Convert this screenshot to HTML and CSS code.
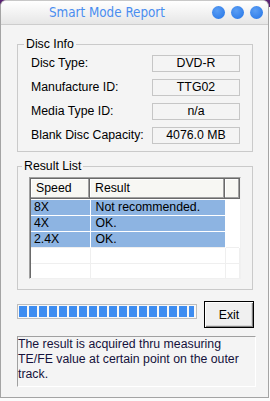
FILE: index.html
```html
<!DOCTYPE html>
<html lang="en">
<head>
    <meta charset="UTF-8">
    <meta name="viewport" content="width=device-width, initial-scale=1.0">
    <title>Smart Mode Report</title>
    <link rel="stylesheet" href="styles.css">
</head>
<body>
    <div class="window">
        <div class="titlebar">
            <span class="title">Smart Mode Report</span>
            <div class="dots">
                <span class="dot"></span>
                <span class="dot"></span>
                <span class="dot"></span>
            </div>
        </div>
        <div class="content">
            <fieldset class="group disc-info">
                <legend>Disc Info</legend>
                <div class="row"><span class="label">Disc Type:</span><span class="value">DVD-R</span></div>
                <div class="row"><span class="label">Manufacture ID:</span><span class="value">TTG02</span></div>
                <div class="row"><span class="label">Media Type ID:</span><span class="value">n/a</span></div>
                <div class="row"><span class="label">Blank Disc Capacity:</span><span class="value">4076.0 MB</span></div>
            </fieldset>

            <fieldset class="group result-list">
                <legend>Result List</legend>
                <div class="listview">
                    <div class="listview-inner">
                        <table>
                            <thead>
                                <tr><th class="col-speed">Speed</th><th class="col-result">Result</th><th class="col-fill"></th></tr>
                            </thead>
                            <tbody>
                                <tr class="sel"><td>8X</td><td>Not recommended.</td><td></td></tr>
                                <tr class="sel"><td>4X</td><td>OK.</td><td></td></tr>
                                <tr class="sel"><td>2.4X</td><td>OK.</td><td></td></tr>
                                <tr><td></td><td></td><td></td></tr>
                                <tr><td></td><td></td><td></td></tr>
                            </tbody>
                        </table>
                    </div>
                </div>
            </fieldset>

            <div class="actions">
                <div class="progress"><div class="progress-fill"></div></div>
                <button class="exit" type="button">Exit</button>
            </div>

            <div class="note">The result is acquired thru measuring TE/FE value at certain point on the outer track.</div>
        </div>
    </div>
</body>
</html>
```

FILE: styles.css
```css
body {
    margin: 0;
    width: 270px;
    height: 401px;
    background: linear-gradient(to bottom, #5a2273 0, #5a2273 7px, #fbfbfb 7px);
    font-family: "Liberation Sans", Arial, sans-serif;
    font-size: 12.3px;
    color: #000;
}
.window {
    width: 269px;
    height: 398px;
    box-sizing: border-box;
    border: 1px solid #a4a4a4;
    border-top-color: #c8c8c8;
    border-radius: 6px 6px 0 0;
    background: #f4f4f4;
    overflow: hidden;
}
.titlebar {
    height: 23px;
    border-bottom: 1px solid #cdcdcd;
    background: linear-gradient(to bottom, #ffffff, #e6e6e6);
    display: flex;
    align-items: center;
}
.title {
    padding-left: 48px;
    font-family: "DejaVu Sans Condensed", "DejaVu Sans", sans-serif;
    font-stretch: condensed;
    font-size: 13.3px;
    color: #4a8df0;
    flex: 1;
}
.dots {
    display: flex;
    gap: 6px;
    padding-right: 5px;
    padding-bottom: 1px;
}
.dot {
    width: 13px;
    height: 13px;
    border-radius: 50%;
    background: radial-gradient(circle at 40% 35%, #5b9ef4, #3380ea 70%, #2b72d8);
}
.content {
    padding-left: 16px;
}
.group {
    margin: 0;
    width: 236px;
    box-sizing: border-box;
    border: 1px solid #cacaca;
    min-width: 0;
}
.group legend {
    margin-left: -7px;
    padding: 0 2px;
    line-height: 14px;
}
.disc-info {
    margin-top: 12px;
    padding: 4px 0 7px 13px;
    display: grid;
    row-gap: 7px;
}
.row {
    display: flex;
    align-items: center;
    height: 17px;
}
.label {
    width: 121px;
    margin-top: -2px;
}
.value {
    width: 88px;
    height: 17px;
    box-sizing: border-box;
    border: 1px solid #c6c6c6;
    text-align: center;
    line-height: 15px;
}
.result-list {
    margin-top: 7px;
    padding: 4px 0 10px 11px;
}
.listview {
    width: 212px;
    height: 102px;
    box-sizing: border-box;
    border-top: 1px solid #a0a0a0;
    border-left: 1px solid #a0a0a0;
    border-right: 1px solid #f0f0f0;
    border-bottom: 1px solid #f0f0f0;
    overflow: hidden;
}
.listview-inner {
    height: 100%;
    border-top: 1px solid #6a6a6a;
    border-left: 1px solid #6a6a6a;
    background: #fff;
    overflow: hidden;
}
table {
    border-collapse: collapse;
    table-layout: fixed;
    width: 209px;
}
th {
    height: 20px;
    padding: 0 0 1px 5px;
    box-sizing: border-box;
    text-align: left;
    font-weight: normal;
    background: #f7f7f3;
    box-shadow: inset -1px -1px 0 #6a6a6a, inset -2px -2px 0 #a0a0a0, inset 1px 1px 0 #fff;
}
.col-speed { width: 59px; }
.col-result { width: 135px; }
td {
    height: 15px;
    padding: 0 0 0 3px;
    border-top: 1px solid #efefef;
    border-right: 1px solid #efefef;
    line-height: 15px;
    white-space: nowrap;
}
td:nth-child(2) {
    padding-left: 5px;
}
.sel td {
    border-top-color: #fff;
    border-right-color: #fff;
}
.sel td:nth-child(1),
.sel td:nth-child(2) {
    background: #8db4e2;
}
.actions {
    display: flex;
    align-items: flex-start;
    gap: 7px;
    margin-top: 11px;
}
.progress {
    margin-top: 3px;
    width: 180px;
    height: 15px;
    box-sizing: border-box;
    border: 1px solid #bdbdbd;
    padding: 1px;
    background: #f8f8f8;
}
.progress-fill {
    width: 175px;
    height: 11px;
    background: repeating-linear-gradient(to right, #3d8cf0 0, #3d8cf0 8px, transparent 8px, transparent 10px);
}
.exit {
    width: 50px;
    height: 27px;
    border: 1px solid #000;
    background: #f0f0f0;
    box-shadow: inset 1px 1px 0 #fff, inset -1px -1px 0 #808080, inset -2px -2px 0 #d8d8d8;
    font-family: inherit;
    font-size: 12.3px;
    color: #000;
    padding: 0;
}
.note {
    margin-top: 8px;
    width: 239px;
    height: 51px;
    box-sizing: border-box;
    border-top: 1px solid #a0a0a0;
    border-left: 1px solid #a0a0a0;
    border-right: 1px solid #fff;
    border-bottom: 1px solid #fff;
    line-height: 15px;
    color: #15123c;
}
```
